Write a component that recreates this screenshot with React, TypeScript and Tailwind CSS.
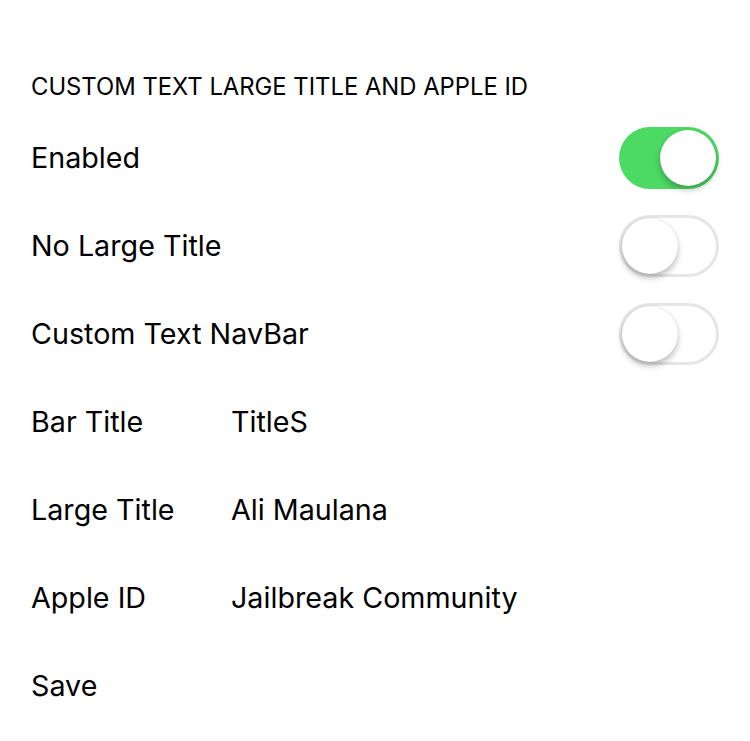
import React from "react";

function Toggle({ on }: { on: boolean }) {
  return (
    <div
      className={
        on
          ? "relative w-[100px] h-[62px] rounded-full bg-[#4cd964] flex items-center justify-end pr-[3px] shrink-0"
          : "relative w-[100px] h-[62px] rounded-full bg-white border-[3px] border-[#e6e6e6] flex items-center justify-start shrink-0"
      }
    >
      <div className="w-[56px] h-[56px] rounded-full bg-white shadow-[0_4px_6px_rgba(0,0,0,0.25),0_0_1px_rgba(0,0,0,0.2)]" />
    </div>
  );
}

function Row({ label, value, toggle }: { label: string; value?: string; toggle?: boolean }) {
  return (
    <div className="h-[88px] flex items-center justify-between pl-[31px] pr-[31px]">
      <div className="flex items-center whitespace-nowrap">
        <span className="min-w-[200px] shrink-0 text-[28.7px] text-black">{label}</span>
        {value !== undefined && <span className="text-[28.7px] text-black">{value}</span>}
      </div>
      {toggle !== undefined && <Toggle on={toggle} />}
    </div>
  );
}

export default function App() {
  return (
    <div
      className="w-[750px] h-[741px] bg-white overflow-hidden"
      style={{ fontFamily: "Inter, 'Noto Sans', sans-serif" }}
    >
      <div className="pt-[74px] pl-[31px] text-[23.8px] leading-[26px] text-black whitespace-nowrap">
        CUSTOM TEXT LARGE TITLE AND APPLE ID
      </div>
      <div className="mt-[14px]">
        <Row label="Enabled" toggle={true} />
        <Row label="No Large Title" toggle={false} />
        <Row label="Custom Text NavBar" toggle={false} />
        <Row label="Bar Title" value="TitleS" />
        <Row label="Large Title" value="Ali Maulana" />
        <Row label="Apple ID" value="Jailbreak Community" />
        <Row label="Save" />
      </div>
    </div>
  );
}
